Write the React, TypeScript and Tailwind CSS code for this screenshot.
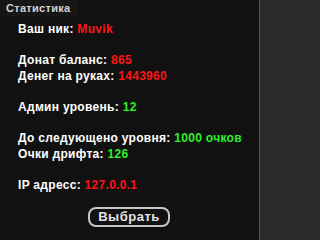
const FONT = { fontFamily: '"Liberation Sans", Arial, sans-serif' };

function Line({ label, value, color }: { label?: string; value?: string; color?: string }) {
  if (!label) return <div className="h-[15.6px]" />;
  return (
    <div className="h-[15.6px] whitespace-nowrap">
      <span className="text-white">{label} </span>
      <span className={color}>{value}</span>
    </div>
  );
}

const RED = "text-[#ff1414]";
const GREEN = "text-[#2cf02c]";

export default function App() {
  return (
    <div className="w-full min-w-[264px] h-[240px] bg-[#2a2a2a] flex" style={FONT}>
      <div className="w-[260px] h-full bg-[#111111] border-r border-[#5a5a5a] flex flex-col">
        {/* Title */}
        <div className="h-[16px] px-[6px] pt-[2px] text-[11px] leading-[12px] font-bold tracking-[0.3px] text-[#d4d4d4] bg-[#161616] self-start">
          Статистика
        </div>

        {/* Stats */}
        <div className="pl-[18px] pt-[6px] text-[12px] leading-[15.6px] font-bold tracking-[0.3px]">
          <Line label="Ваш ник:" value="Muvik" color={RED} />
          <Line />
          <Line label="Донат баланс:" value="865" color={RED} />
          <Line label="Денег на руках:" value="1443960" color={RED} />
          <Line />
          <Line label="Админ уровень:" value="12" color={GREEN} />
          <Line />
          <Line label="До следующено уровня:" value="1000 очков" color={GREEN} />
          <Line label="Очки дрифта:" value="126" color={GREEN} />
          <Line />
          <Line label="IP адресс:" value="127.0.0.1" color={RED} />
        </div>

        {/* Button */}
        <div className="mt-[13px] flex justify-center pr-[1px]">
          <button className="w-[82px] h-[20px] rounded-[8px] border-2 border-[#c4c4c4] text-[#e2e2e2] text-[13px] font-bold leading-none tracking-[0.5px] flex items-center justify-center">
            Выбрать
          </button>
        </div>
      </div>
    </div>
  );
}
